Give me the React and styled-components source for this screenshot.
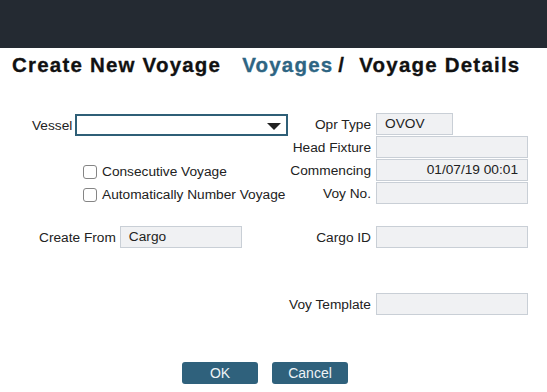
import React from 'react';
import styled, { createGlobalStyle } from 'styled-components';

const GlobalStyle = createGlobalStyle`
  body {
    margin: 0;
    background: #fff;
    font-family: "Liberation Sans", Arial, sans-serif;
    color: #222;
  }
`;

const Page = styled.div`
  width: 547px;
  height: 392px;
  overflow: hidden;
`;

const TopBar = styled.div`
  height: 48px;
  background: #242a32;
`;

const Title = styled.h1`
  display: flex;
  align-items: baseline;
  margin: 5px 0 0;
  padding-left: 12px;
  height: 24px;
  line-height: 24px;
  font-size: 20.5px;
  font-weight: 700;
  letter-spacing: 1.2px;
  color: #111;
  white-space: nowrap;
  -webkit-text-stroke: 0.3px currentColor;
`;

const Crumb = styled.span`
  margin-left: ${p => p.$gap || 0}px;
  color: ${p => (p.$link ? '#2e6583' : '#111')};
`;

const Form = styled.div`
  display: flex;
  justify-content: space-between;
  margin-top: 36px;
  padding-right: 19px;
`;

const LeftColumn = styled.div`
  display: flex;
  flex-direction: column;
  padding-top: 1px;
`;

const Row = styled.div`
  display: flex;
  align-items: center;
  gap: ${p => p.$gap || 3}px;
  margin-left: ${p => p.$indent || 0}px;
  margin-top: ${p => p.$top || 0}px;
  height: ${p => p.$height || 22}px;
`;

const Label = styled.label`
  font-size: 13.7px;
  color: #222;
  white-space: nowrap;
  justify-self: end;
`;

const Select = styled.div`
  position: relative;
  box-sizing: border-box;
  width: 213px;
  height: 22px;
  border: 2px solid #2f5f77;
  background: #fff;
`;

const Arrow = styled.span`
  position: absolute;
  right: 5px;
  top: 7px;
  width: 0;
  height: 0;
  border-left: 7px solid transparent;
  border-right: 7px solid transparent;
  border-top: 7px solid #222;
`;

const Check = styled.span`
  display: inline-block;
  box-sizing: border-box;
  width: 14px;
  height: 14px;
  border: 1px solid #858585;
  border-radius: 3px;
  background: #fff;
`;

const CheckText = styled.span`
  font-size: 13.7px;
  color: #222;
  white-space: nowrap;
`;

const Field = styled.div`
  box-sizing: border-box;
  width: ${p => p.$width || 152}px;
  height: 22px;
  padding: 0 ${p => (p.$right ? 9 : 8)}px;
  border: 1px solid #c9cfd6;
  background: #f0f1f3;
  font-size: 13.7px;
  line-height: 20px;
  color: #222;
  text-align: ${p => (p.$right ? 'right' : 'left')};
  justify-self: start;
`;

const RightGrid = styled.div`
  display: grid;
  grid-template-columns: auto 152px;
  column-gap: 5px;
  row-gap: 1px;
  align-items: center;
`;

const Spacer = styled.div`
  grid-column: 1 / -1;
  height: ${p => p.$height}px;
`;

const Buttons = styled.div`
  display: flex;
  justify-content: center;
  gap: 14px;
  margin-top: 47px;
  padding-right: 17px;
`;

const Button = styled.button`
  width: 76px;
  height: 22px;
  padding: 0;
  border: none;
  border-radius: 3px;
  background: #2f617c;
  color: #eef3f6;
  font-family: "Liberation Sans", Arial, sans-serif;
  font-size: 14px;
  cursor: pointer;
`;

export default function App() {
  return (
    <Page>
      <GlobalStyle />
      <TopBar />
      <Title>
        <Crumb>Create New Voyage</Crumb>
        <Crumb $gap={21} $link>Voyages</Crumb>
        <Crumb $gap={5}>/</Crumb>
        <Crumb $gap={14}>Voyage Details</Crumb>
      </Title>
      <Form>
        <LeftColumn>
          <Row $indent={32}>
            <Label>Vessel</Label>
            <Select>
              <Arrow />
            </Select>
          </Row>
          <Row $indent={83} $top={24} $height={23} $gap={5}>
            <Check />
            <CheckText>Consecutive Voyage</CheckText>
          </Row>
          <Row $indent={83} $height={23} $gap={5}>
            <Check />
            <CheckText>Automatically Number Voyage</CheckText>
          </Row>
          <Row $indent={39} $top={20} $gap={4}>
            <Label>Create From</Label>
            <Field $width={122}>Cargo</Field>
          </Row>
        </LeftColumn>
        <RightGrid>
          <Label>Opr Type</Label>
          <Field $width={77}>OVOV</Field>
          <Label>Head Fixture</Label>
          <Field />
          <Label>Commencing</Label>
          <Field $right>01/07/19 00:01</Field>
          <Label>Voy No.</Label>
          <Field />
          <Spacer $height={20} />
          <Label>Cargo ID</Label>
          <Field />
          <Spacer $height={43} />
          <Label>Voy Template</Label>
          <Field />
        </RightGrid>
      </Form>
      <Buttons>
        <Button>OK</Button>
        <Button>Cancel</Button>
      </Buttons>
    </Page>
  );
}
